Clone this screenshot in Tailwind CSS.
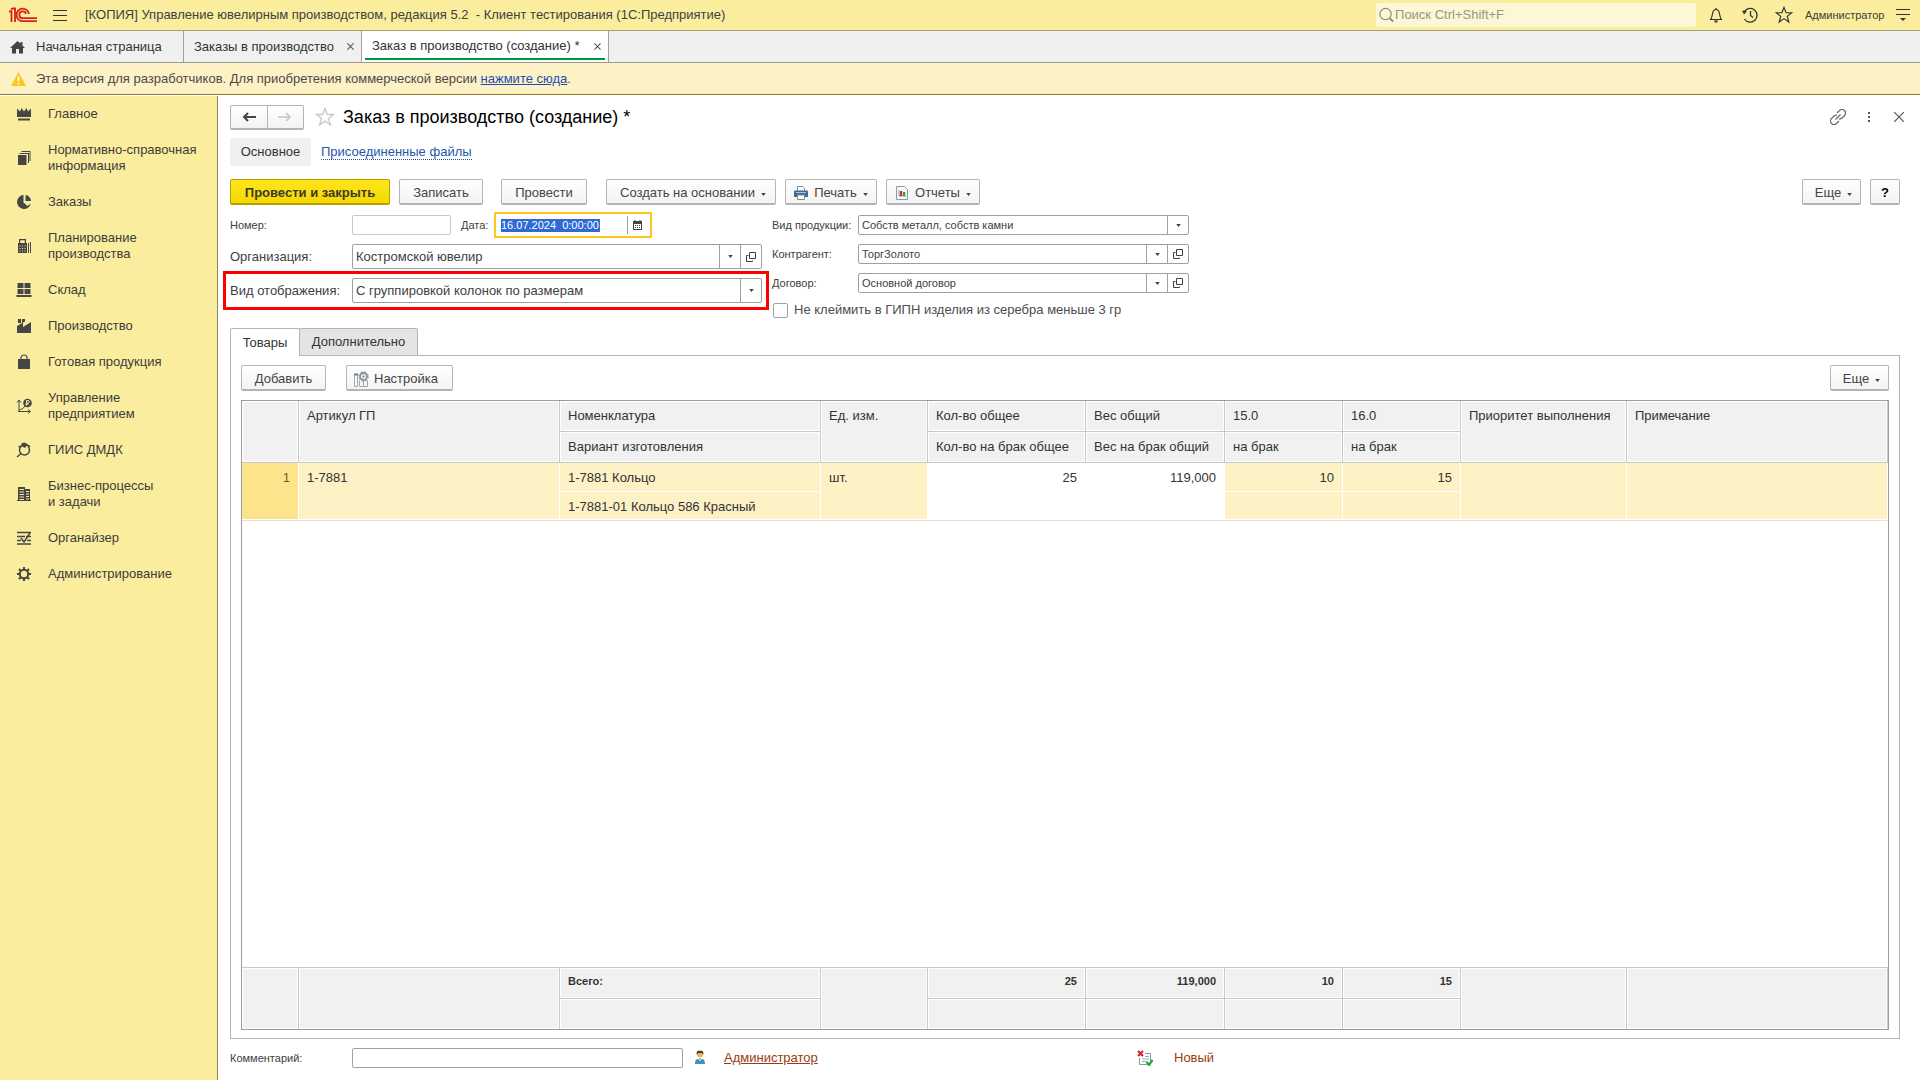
<!DOCTYPE html>
<html lang="ru">
<head>
<meta charset="utf-8">
<title>Заказ в производство (создание) *</title>
<script src="https://cdn.jsdelivr.net/npm/@tailwindcss/browser@4"></script>
</head>
<body class="flex min-h-screen flex-col bg-white font-['Liberation_Sans',Arial,sans-serif] text-[13px] leading-4 text-[#404040]">
<svg class="hidden">
  <symbol id="down" viewBox="0 0 6 4"><path d="M0 0h6L3 4z" fill="#404040"/></symbol>
  <symbol id="open" viewBox="0 0 10 10"><path d="M3.5.5h6v6h-6zM2.500 3.500H.5v6h6V8.500" fill="none" stroke="#404040"/></symbol>
  <symbol id="star" viewBox="0 0 20 20"><path d="M10 1.500l2.300 6h6.200l-4.900 4 1.800 6.300L10 14l-5.400 3.800 1.800-6.300-4.900-4h6.200z" fill="none" stroke="currentColor" stroke-width="1.300"/></symbol>
</svg>

<header class="flex h-[31px] shrink-0 items-center border-b border-[#a8a070] bg-[#fbed9e] pl-2">
  <svg class="h-4 w-[30px] shrink-0" viewBox="0 0 30 16" fill="none" stroke="#d8201c" stroke-width="1.800"><path d="M1 4.500H3.500V15M3 2.500L4.500 1.500H7V15"/><path d="M21 7A6.300 6.300 0 1 0 15 14.200H29"/><path d="M18 7A3.400 3.400 0 1 0 15 11.200H29"/></svg>
  <button class="ml-[15px] flex w-[14px] flex-col gap-[4px]" aria-label="Меню"><span class="h-px w-full bg-[#333]"></span><span class="h-px w-full bg-[#333]"></span><span class="h-px w-full bg-[#333]"></span></button>
  <div class="ml-[18px] whitespace-pre">[КОПИЯ] Управление ювелирным производством, редакция 5.2  - Клиент тестирования (1С:Предприятие)</div>
  <label class="ml-auto flex h-6 w-80 items-center rounded-xs bg-[#fdf7d6] pl-[2px]">
    <svg class="h-4 w-[18px]" viewBox="0 0 18 16" fill="none" stroke="#8f8a70" stroke-width="1.200"><circle cx="8" cy="7" r="6"/><path d="M12 11l4 4" stroke-width="2"/></svg>
    <input class="w-full bg-transparent outline-none placeholder:text-[#9a957c]" placeholder="Поиск Ctrl+Shift+F" aria-label="Поиск">
  </label>
  <button class="ml-3 h-4 w-4" aria-label="Уведомления"><svg viewBox="0 0 16 16" fill="none" stroke="#333" stroke-width="1.200"><path d="M8 1v1M2 12.500h12M2.500 12.500C4 11 4 9 4.500 6.500 5 4 6 2.500 8 2.500s3 1.500 3.500 4c.5 2.500.5 4.500 2 6"/><path d="M6 13.500h4L9 15.500H7z" fill="#333" stroke="none"/></svg></button>
  <button class="ml-[18px] h-4 w-4" aria-label="История"><svg viewBox="0 0 16 16" fill="none" stroke="#333" stroke-width="1.300"><path d="M2 5.500A6.800 6.800 0 1 1 2.500 12M8.500 4v4.500l2.500 2"/><path d="M0 3.500l5 .500-3 3.500z" fill="#333" stroke="none"/></svg></button>
  <button class="ml-[17px] h-[18px] w-[18px] text-[#333]" aria-label="Избранное"><svg class="size-full"><use href="#star"/></svg></button>
  <span class="ml-3 w-[78px] text-[11px]">Администратор</span>
  <button class="mr-[10px] ml-[13px] h-3 w-[14px]" aria-label="Настройки"><svg viewBox="0 0 14 12"><path d="M0 .5h14M0 5.500h14" stroke="#333"/><path d="M4 9h6l-3 3z" fill="#333"/></svg></button>
</header>

<nav class="flex h-8 shrink-0 border-b border-[#9a9a90] bg-[#f0f0f0] text-[#333]">
  <a href="#" class="flex w-[184px] items-center border-r border-[#a0a0a0] pl-[10px]"><svg class="mr-[11px] h-[14px] w-[15px]" viewBox="0 0 15 14" fill="#444"><path d="M7.500 1L0 8h2v5.500h4V9h3v4.500h4V8h2l-2.500-2.500V2h-2v1.500z"/></svg>Начальная страница</a>
  <div class="flex w-[178px] items-center border-r border-[#a0a0a0] pl-[10px]"><a href="#">Заказы в производство</a><button class="mr-[7px] ml-auto" aria-label="Закрыть вкладку"><svg class="size-[7px]" viewBox="0 0 8 8"><path d="M.5.5l7 7M7.500.5l-7 7" stroke="#555" stroke-width="1.200"/></svg></button></div>
  <div class="w-[247px] border-r border-[#a0a0a0] bg-white px-[3px]"><div class="flex h-[29px] items-center border-b-2 border-[#009646] pt-[3px] pl-[7px]"><a href="#">Заказ в производство (создание) *</a><button class="mr-[4px] ml-auto" aria-label="Закрыть вкладку"><svg class="size-[7px]" viewBox="0 0 8 8"><path d="M.5.5l7 7M7.500.5l-7 7" stroke="#555" stroke-width="1.200"/></svg></button></div></div>
</nav>

<div class="mb-px flex h-8 shrink-0 items-center border-b border-[#927a20] bg-[#fdf1c6] pl-[11px] text-[#4a4a4a]">
  <svg class="mr-[10px] h-[14px] w-[15px]" viewBox="0 0 15 14"><path d="M7.500 0L15 14H0z" fill="#fcc61e"/><path d="M7.500 4.500v5M7.500 10.800v1.700" stroke="#fff" stroke-width="1.600"/></svg>
  <p>Эта версия для разработчиков. Для приобретения коммерческой версии <a href="#" class="text-[#1c4fae] underline">нажмите сюда</a>.</p>
</div>

<div class="flex flex-1">
<aside class="w-[218px] shrink-0 border-r border-[#8c8660] bg-[#fbed9e] text-[#3c3c3c]">
  <ul class="[&_a]:flex [&_a]:items-center [&_a]:py-[10px] [&_a]:pl-4 [&_svg]:mr-4 [&_svg]:size-4 [&_svg]:shrink-0 [&_svg]:fill-[#464646]">
    <li><a href="#"><svg viewBox="0 0 16 16"><path d="M1 2.500l3 3L5.500 2 8 5.500 10.500 2 12 5.500l3-3V11H1zM2 12.500h12v2H2z"/></svg>Главное</a></li>
    <li><a href="#"><svg viewBox="0 0 16 16"><path d="M2 5h8.500v10H2zM3.500 3H13v10h-1V4H3.500zM5.500 1h9v10h-1V2h-8z"/></svg>Нормативно-справочная<br>информация</a></li>
    <li><a href="#"><svg viewBox="0 0 16 16"><path d="M7.500 1v7.500l4 3.500 3.300-2.500A7 7 0 1 1 7.500 1zM9.500 1A6 6 0 0 1 15 7H9.500z"/></svg>Заказы</a></li>
    <li><a href="#"><svg viewBox="0 0 16 16"><path fill-rule="evenodd" d="M3 1h7v4h1v10H2V5h1zM4.200 2.200V5h4.600V2.200zM3.500 7.500v1h1v-1zm2.500 0v1h1v-1zm2.500 0v1h1v-1zM3.500 10v1h1v-1zM6 10v1h1v-1zm2.500 0v1h1v-1zM3.500 12.500v1h1v-1zm2.500 0v1h1v-1zm2.500 0v1h1v-1zM12 5h1v10h-1zM14 4h1v11h-1z"/></svg>Планирование<br>производства</a></li>
    <li><a href="#"><svg viewBox="0 0 16 16"><path d="M1.500 1h6v5h-6zM8.500 1h6v5h-6zM1.500 7h6v5h-6zM8.500 7h6v5h-6zM.5 13h15v2H.5z"/></svg>Склад</a></li>
    <li><a href="#"><svg viewBox="0 0 16 16"><path d="M2 1h3v4H2zM6 1h3v2.500L6 5zM1 8l6-3.500V9l8-5v11H1z"/></svg>Производство</a></li>
    <li><a href="#"><svg viewBox="0 0 16 16"><path d="M2 5h12v10H2z"/><path d="M5 7V4a3 3 0 0 1 6 0v3" fill="none" stroke="#464646" stroke-width="1.200"/></svg>Готовая продукция</a></li>
    <li><a href="#"><svg viewBox="0 0 16 16"><path d="M3 14V3M1 4.500L3 2l2 2.500M2 13.500h12M12 11.500l2.500 2-2.500 2M3 12c2-.5 4-1 6-4" class="fill-none stroke-[#464646]"/><circle cx="11.500" cy="5" r="4.300"/><path d="M10.500 7.500v-5H12a1.300 1.300 0 0 1 0 2.600h-2M9.500 6.300h3" fill="none" stroke="#fbed9e"/></svg>Управление<br>предприятием</a></li>
    <li><a href="#"><svg viewBox="0 0 16 16"><path d="M5.500 1.500L8 .5l3 1 .5 2L8.500 6 5 3.500z"/><path d="M5 4.500a5 5 0 1 0 7 0M11 3l3 1.500M5 11.500L1 15M2.500 4.500L6 4.500" class="fill-none stroke-[#464646] stroke-[1.500]"/></svg>ГИИС ДМДК</a></li>
    <li><a href="#"><svg viewBox="0 0 16 16"><path fill-rule="evenodd" d="M2 1h7v2h5v11h1v1H1v-1h1zM3.500 3v1H8V3zm0 2.500v1H8v-1zm0 2.500v1H8V8zm0 2.500v1H8v-1zm0 2.500v1H8v-1zM10 5v1h3V5zm0 2.500v1h3v-1zm0 2.500v1h3v-1zm0 2.500v1h3v-1z"/></svg>Бизнес-процессы<br>и задачи</a></li>
    <li><a href="#"><svg viewBox="0 0 16 16"><path d="M1 2.500h14M1 6.500h8M1 10.500h4M11 10.500h4M1 14h14M5 8l3 4 6-9M10 6.500h5" class="fill-none stroke-[#464646] stroke-[1.500]"/></svg>Органайзер</a></li>
    <li><a href="#"><svg viewBox="0 0 16 16"><circle cx="8" cy="8" r="4.200" class="fill-none stroke-[#464646] stroke-2"/><path d="M8 1v3M8 12v3M1 8h3M12 8h3M3 3l2 2M11 11l2 2M13 3l-2 2M5 11l-2 2" class="stroke-[#464646] stroke-2"/></svg>Администрирование</a></li>
  </ul>
</aside>

<main class="flex min-w-0 flex-1 flex-col pt-[9px] pr-5 pb-3 pl-3">
  <div class="flex h-6 shrink-0 items-center">
    <div class="flex h-[25px] w-[74px] rounded-xs border border-b-2 border-[#b4b4b4] bg-linear-to-b from-white to-[#f3f3f3]">
      <button class="grid flex-1 place-items-center border-r border-[#b4b4b4]" aria-label="Назад"><svg class="h-[10px] w-[14px]" viewBox="0 0 14 10"><path d="M14 5H3M6 1L2 5l4 4" fill="none" stroke="#444" stroke-width="2"/></svg></button>
      <button class="grid flex-1 place-items-center" aria-label="Вперед"><svg class="h-[10px] w-[14px]" viewBox="0 0 14 10"><path d="M0 5h11M8 1l4 4-4 4" fill="none" stroke="#c4c4c4" stroke-width="1.600"/></svg></button>
    </div>
    <button class="ml-[11px] size-5 text-[#c8c8c8]" aria-label="В избранное"><svg class="size-full"><use href="#star"/></svg></button>
    <h1 class="ml-[8px] text-[18px] leading-6 text-black">Заказ в производство (создание) *</h1>
    <button class="ml-auto size-4" aria-label="Ссылка"><svg viewBox="0 0 16 16" fill="none" stroke="#666" stroke-width="1.200"><path d="M7 4l2.500-2.500a3.200 3.200 0 0 1 5 5L12 9a3.200 3.200 0 0 1-3 .8M9 12l-2.500 2.500a3.200 3.200 0 0 1-5-5L4 7a3.200 3.200 0 0 1 3-.8M5.500 10.500l5-5"/></svg></button>
    <button class="ml-[22px] flex w-[2px] flex-col gap-[2px]" aria-label="Еще"><span class="h-[2px] w-full bg-[#555]"></span><span class="h-[2px] w-full bg-[#555]"></span><span class="h-[2px] w-full bg-[#555]"></span></button>
    <button class="mr-[-4px] ml-[24px] size-[10px]" aria-label="Закрыть"><svg viewBox="0 0 10 10"><path d="M0 0l10 10M10 0L0 10" stroke="#555" stroke-width="1.200"/></svg></button>
  </div>

  <div class="mt-[9px] flex h-7 shrink-0 items-center">
    <a href="#" class="flex h-7 w-[81px] items-center justify-center rounded-xs bg-[#f0f0f0] text-[#333]">Основное</a>
    <a href="#" class="ml-[10px] border-b border-dotted border-[#1c4fae] leading-[14px] text-[#2456a8]">Присоединенные файлы</a>
  </div>

  <div class="mt-[13px] flex h-[26px] shrink-0 text-[#444] [&>button]:flex [&>button]:items-center [&>button]:justify-center [&>button]:rounded-xs [&>button]:border [&>button]:border-b-2 [&>button]:pt-[2px]">
    <button class="w-40 border-[#b5a100] bg-linear-to-b from-[#ffe51a] to-[#f5d800] font-bold text-[#3a3a2a]">Провести и закрыть</button>
    <button class="ml-[9px] w-[84px] border-[#b4b4b4] bg-linear-to-b from-white to-[#f3f3f3]">Записать</button>
    <button class="ml-[18px] w-[86px] border-[#b4b4b4] bg-linear-to-b from-white to-[#f3f3f3]">Провести</button>
    <button class="ml-[19px] w-[170px] gap-[6px] border-[#b4b4b4] bg-linear-to-b from-white to-[#f3f3f3] pl-1">Создать на основании<svg class="mt-[3px] h-[3px] w-[5px]"><use href="#down"/></svg></button>
    <button class="ml-[9px] w-[92px] gap-[6px] border-[#b4b4b4] bg-linear-to-b from-white to-[#f3f3f3]"><svg class="h-[14px] w-[14px]" viewBox="0 0 14 14"><path d="M3.500 5V.5h5l2 2V5" fill="#fff" stroke="#7d8c9c"/><path d="M1 4.500h12a1 1 0 0 1 1 1V11H0V5.500a1 1 0 0 1 1-1z" fill="#3d6b96"/><path d="M3.500 9h7v4.500h-7z" fill="#fff" stroke="#7d8c9c"/><path d="M2 6.500h10" stroke="#a9c6de"/></svg>Печать<svg class="mt-[3px] h-[3px] w-[5px]"><use href="#down"/></svg></button>
    <button class="ml-[9px] w-[94px] gap-[6px] border-[#b4b4b4] bg-linear-to-b from-white to-[#f3f3f3]"><svg class="h-[14px] w-[14px]" viewBox="0 0 14 14"><path d="M1.500.5h8l3 3v10h-11z" fill="#f6f8fa" stroke="#8a9aaa"/><path d="M4 4v6h7" fill="none" stroke="#8a9aaa"/><path d="M5 5h2.200v5H5z" fill="#e02222"/><path d="M8 6h2.200v4H8z" fill="#1fa43a"/></svg>Отчеты<svg class="mt-[3px] h-[3px] w-[5px]"><use href="#down"/></svg></button>
    <button class="ml-auto w-[59px] gap-[6px] border-[#b4b4b4] bg-linear-to-b from-white to-[#f3f3f3] pl-1">Еще<svg class="mt-[3px] h-[3px] w-[5px]"><use href="#down"/></svg></button>
    <button class="ml-[9px] w-[30px] border-[#b4b4b4] bg-linear-to-b from-white to-[#f3f3f3] font-bold text-black">?</button>
  </div>

  <form class="mt-[7px] flex shrink-0">
    <div class="w-[532px]">
      <div class="flex h-[26px] items-center text-[11px]">
        <label for="num" class="w-[122px]">Номер:</label>
        <input id="num" class="h-5 w-[99px] rounded-xs border border-[#c8c8c8]">
        <label for="date" class="ml-[10px] w-[33px]">Дата:</label>
        <div class="flex h-[26px] w-[158px] items-center border-2 border-[#fcc81e] pl-[5px]">
          <input id="date" class="h-[13px] w-[99px] bg-[#2f69d6] text-white" value="16.07.2024  0:00:00">
          <button type="button" class="ml-auto grid h-[18px] w-[23px] place-items-center border-l border-[#a0a0a0] pr-[3px]" aria-label="Календарь"><svg class="h-[10px] w-[9px]" viewBox="0 0 9 10"><path fill-rule="evenodd" d="M0 1h1.500V0h1v1h4V0h1v1H9v9H0zM1 4v5h7V4z" fill="#444"/><path d="M2 5.500h5M2 7.500h5" stroke="#444" stroke-dasharray="1 1"/></svg></button>
        </div>
      </div>
      <div class="mt-[6px] flex h-[25px] items-center">
        <label for="org" class="w-[122px]">Организация:</label>
        <div class="flex h-[25px] flex-1 rounded-xs border border-[#a0a0a0] *:border-[#a0a0a0]">
          <select id="org" class="min-w-0 flex-1 appearance-none pl-[3px]"><option>Костромской ювелир</option></select>
          <span class="grid w-[21px] place-items-center border-l"><svg class="h-[3px] w-[5px]"><use href="#down"/></svg></span>
          <button type="button" class="grid w-[21px] place-items-center border-l" aria-label="Открыть"><svg class="size-[10px]"><use href="#open"/></svg></button>
        </div>
      </div>
      <div class="-mx-[7px] mt-[2px] flex h-[39px] items-center border-3 border-[#fe0000] px-1">
        <label for="view" class="w-[122px]">Вид отображения:</label>
        <div class="flex h-[25px] flex-1 rounded-xs border border-[#a0a0a0] *:border-[#a0a0a0]">
          <select id="view" class="min-w-0 flex-1 appearance-none pl-[3px]"><option>С группировкой колонок по размерам</option></select>
          <span class="grid w-[21px] place-items-center border-l"><svg class="h-[3px] w-[5px]"><use href="#down"/></svg></span>
        </div>
      </div>
    </div>

    <div class="ml-[10px] flex w-[417px] flex-col gap-[9px] pt-[3px] text-[11px]">
      <div class="flex h-5 items-center">
        <label for="kind" class="w-[86px]">Вид продукции:</label>
        <div class="flex h-5 flex-1 rounded-xs border border-[#a0a0a0] *:border-[#a0a0a0]">
          <select id="kind" class="min-w-0 flex-1 appearance-none pl-[3px]"><option>Собств металл, собств камни</option></select>
          <span class="grid w-[21px] place-items-center border-l"><svg class="h-[3px] w-[5px]"><use href="#down"/></svg></span>
        </div>
      </div>
      <div class="flex h-5 items-center">
        <label for="partner" class="w-[86px]">Контрагент:</label>
        <div class="flex h-5 flex-1 rounded-xs border border-[#a0a0a0] *:border-[#a0a0a0]">
          <select id="partner" class="min-w-0 flex-1 appearance-none pl-[3px]"><option>ТоргЗолото</option></select>
          <span class="grid w-[21px] place-items-center border-l"><svg class="h-[3px] w-[5px]"><use href="#down"/></svg></span>
          <button type="button" class="grid w-[21px] place-items-center border-l" aria-label="Открыть"><svg class="size-[10px]"><use href="#open"/></svg></button>
        </div>
      </div>
      <div class="flex h-5 items-center">
        <label for="contract" class="w-[86px]">Договор:</label>
        <div class="flex h-5 flex-1 rounded-xs border border-[#a0a0a0] *:border-[#a0a0a0]">
          <select id="contract" class="min-w-0 flex-1 appearance-none pl-[3px]"><option>Основной договор</option></select>
          <span class="grid w-[21px] place-items-center border-l"><svg class="h-[3px] w-[5px]"><use href="#down"/></svg></span>
          <button type="button" class="grid w-[21px] place-items-center border-l" aria-label="Открыть"><svg class="size-[10px]"><use href="#open"/></svg></button>
        </div>
      </div>
      <label class="flex h-4 items-center text-[13px] text-[#4d4d4d]"><input type="checkbox" class="mr-[6px] ml-px size-[15px] appearance-none rounded-xs border border-[#a0a0a0]">Не клеймить в ГИПН изделия из серебра меньше 3 гр</label>
    </div>
  </form>

  <div class="relative z-10 mt-[10px] -mb-px flex h-7 shrink-0 text-[#333]" role="tablist">
    <button role="tab" class="w-[70px] rounded-t-xs border border-b-0 border-[#b4b4b4] bg-white">Товары</button>
    <button role="tab" class="-ml-px w-[119px] rounded-t-xs border border-[#b4b4b4] bg-[#e4e4e4]">Дополнительно</button>
  </div>
  <section class="flex flex-1 flex-col border border-[#b4b4b4] px-[10px] pt-[9px] pb-2">
    <div class="flex h-[26px] shrink-0 text-[#444] [&>button]:flex [&>button]:items-center [&>button]:justify-center [&>button]:rounded-xs [&>button]:border [&>button]:border-b-2 [&>button]:border-[#b4b4b4] [&>button]:bg-linear-to-b [&>button]:from-white [&>button]:to-[#f3f3f3] [&>button]:pt-[2px]">
      <button class="w-[85px]">Добавить</button>
      <button class="ml-5 w-[107px] gap-[5px] pr-2"><svg class="h-4 w-4" viewBox="0 0 16 16" fill="none"><path d="M1.500 15.500v-12h3v12zM6.500 15.500v-6M6.500 15.500h4v-6M14.500 9v6.500h-4" stroke="#9aabb8"/><path d="M1 3.500h4" stroke="#6d8090" stroke-width="2"/><circle cx="10.500" cy="5.500" r="3.500" stroke="#8a8f96" stroke-width="1.800"/><circle cx="10.500" cy="5.500" r="4.800" stroke="#8a8f96" stroke-dasharray="2 1.770"/><circle cx="10.500" cy="5.500" r="1.200" fill="#8a8f96"/></svg>Настройка</button>
      <button class="ml-auto w-[59px] gap-[6px] pl-1">Еще<svg class="mt-[3px] h-[3px] w-[5px]"><use href="#down"/></svg></button>
    </div>

    <div class="mt-[9px] grid flex-1 border border-[#9c9c9c]">
      <table class="h-full w-full table-fixed border-separate border-spacing-0 text-[#333] [&_td]:px-2 [&_th]:px-2 [&_th]:text-left [&_th]:font-normal">
        <colgroup><col class="w-[57px]"><col class="w-[261px]"><col class="w-[261px]"><col class="w-[107px]"><col class="w-[158px]"><col class="w-[139px]"><col class="w-[118px]"><col class="w-[118px]"><col class="w-[166px]"><col></colgroup>
        <thead class="[&_th]:h-[31px] [&_th]:border-r [&_th]:border-b [&_th]:border-[#c8c8c8] [&_th]:bg-[#f1f1f1] [&_th]:pt-[7px] [&_th]:align-top [&_th]:inset-shadow-[0_0_0_1px_#fff]">
          <tr><th rowspan="2"></th><th rowspan="2">Артикул ГП</th><th>Номенклатура</th><th rowspan="2">Ед. изм.</th><th>Кол-во общее</th><th>Вес общий</th><th>15.0</th><th>16.0</th><th rowspan="2">Приоритет выполнения</th><th rowspan="2">Примечание</th></tr>
          <tr><th>Вариант изготовления</th><th>Кол-во на брак общее</th><th>Вес на брак общий</th><th>на брак</th><th>на брак</th></tr>
        </thead>
        <tbody class="[&_td]:border-r [&_td]:border-b [&_td]:border-white [&_td]:bg-[#fdf1c6] [&_td]:pt-[7px] [&_td]:align-top">
          <tr class="h-[29px]"><td rowspan="2" class="bg-[#fde48c]! text-right text-[#6b5f30]">1</td><td rowspan="2">1-7881</td><td>1-7881 Кольцо</td><td rowspan="2">шт.</td><td rowspan="2" class="bg-white! text-right">25</td><td rowspan="2" class="bg-white! text-right">119,000</td><td class="text-right">10</td><td class="text-right">15</td><td rowspan="2"></td><td rowspan="2"></td></tr>
          <tr class="h-[28px]"><td>1-7881-01 Кольцо 586 Красный</td><td></td><td></td></tr>
          <tr class="h-full"><td colspan="10" class="border-t border-t-[#e0e0e0]! bg-white!"></td></tr>
        </tbody>
        <tfoot class="text-[11px] font-bold [&_td]:h-[31px] [&_td]:border-t [&_td]:border-r [&_td]:border-[#c8c8c8] [&_td]:bg-[#f1f1f1] [&_td]:pt-[5px] [&_td]:align-top [&_td]:inset-shadow-[0_0_0_1px_#fff]">
          <tr><td rowspan="2"></td><td rowspan="2"></td><td>Всего:</td><td rowspan="2"></td><td class="text-right">25</td><td class="text-right">119,000</td><td class="text-right">10</td><td class="text-right">15</td><td rowspan="2"></td><td rowspan="2"></td></tr>
          <tr><td></td><td></td><td></td><td></td><td></td></tr>
        </tfoot>
      </table>
    </div>
  </section>

  <div class="mt-[9px] flex h-5 shrink-0 items-center">
    <label for="comment" class="w-[122px] text-[11px]">Комментарий:</label>
    <input id="comment" class="h-5 w-[331px] rounded-xs border border-[#a0a0a0]">
    <svg class="ml-[12px] h-4 w-[10px]" viewBox="0 0 10 16"><circle cx="5" cy="4.500" r="3" fill="#edb25c"/><path d="M1.800 5C1 1 3 .8 5 .8S9 1 8.200 5L7 3H3z" fill="#4a3a28"/><path d="M0 14c0-4 1.500-5 3-5l2 2 2-2c1.500 0 3 1 3 5z" fill="#3d93c8"/><path d="M4 8h2v2L5 11l-1-1z" fill="#edb25c"/></svg>
    <a href="#" class="ml-[19px] w-[98px] text-[#963c10] underline">Администратор</a>
    <svg class="ml-[315px] h-4 w-4" viewBox="0 0 16 16" fill="none"><path d="M2.500 8v6.500h8M8 3.500h5.500V11" stroke="#8499ad"/><path d="M8 6.500h4M5 9h7M5 11.500h5" stroke="#9aabba"/><path d="M1 1l5 5M6 1L1 6" stroke="#dc2626" stroke-width="2.200"/><path d="M9.500 12l2.500 3 3.500-5" stroke="#1faa35" stroke-width="2.200"/></svg>
    <span class="ml-[21px] text-[#963c10]">Новый</span>
  </div>
</main>
</div>
</body>
</html>
